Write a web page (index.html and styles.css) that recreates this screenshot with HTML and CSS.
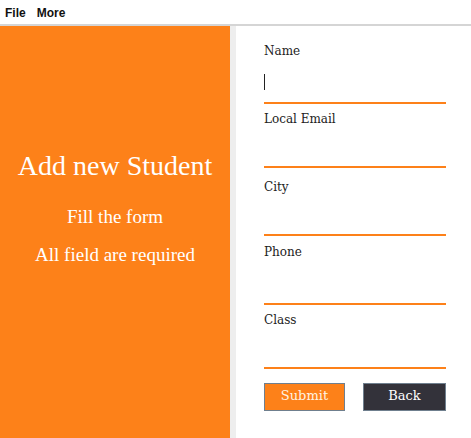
FILE: index.html
```html
<!DOCTYPE html>
<html>
<head>
<meta charset="utf-8">
<link rel="stylesheet" href="styles.css">
</head>
<body>
<div class="menubar">
  <span class="menu-item">File</span>
  <span class="menu-item">More</span>
</div>
<div class="main">
  <div class="intro">
    <h1 class="intro-title">Add new Student</h1>
    <p class="intro-text">Fill the form</p>
    <p class="intro-text">All field are required</p>
  </div>
  <div class="divider"></div>
  <form class="form">
    <div class="field">
      <label class="field-label">Name</label>
      <div class="field-input tall"><span class="caret"></span></div>
    </div>
    <div class="field">
      <label class="field-label">Local Email</label>
      <div class="field-input"></div>
    </div>
    <div class="field spaced">
      <label class="field-label">City</label>
      <div class="field-input"></div>
    </div>
    <div class="field loose">
      <label class="field-label">Phone</label>
      <div class="field-input tall"></div>
    </div>
    <div class="field">
      <label class="field-label">Class</label>
      <div class="field-input"></div>
    </div>
    <div class="actions">
      <button type="button" class="btn btn-submit">Submit</button>
      <button type="button" class="btn btn-back">Back</button>
    </div>
  </form>
</div>
</body>
</html>
```
FILE: styles.css
```css
html, body {
  margin: 0;
  padding: 0;
  background: #ffffff;
}
body {
  width: 471px;
  height: 438px;
  overflow: hidden;
}
.menubar {
  height: 21px;
  padding: 3px 0 0 5px;
  line-height: 21px;
  border-bottom: 2px solid #d5d5d5;
  font-family: "Liberation Sans", Arial, sans-serif;
  font-weight: bold;
  font-size: 12px;
  color: #111;
  display: flex;
  gap: 11px;
}
.main {
  display: flex;
  height: 412px;
}
.intro {
  width: 230px;
  background: #fd8119;
  color: #ffffff;
  text-align: center;
  padding-top: 124px;
  box-sizing: border-box;
  font-family: "Liberation Serif", "Times New Roman", serif;
}
.intro-title {
  margin: 0 0 24px;
  font-weight: normal;
  font-size: 28px;
  line-height: 32px;
}
.intro-text {
  margin: 0 0 16px;
  font-size: 19px;
  line-height: 22px;
}
.divider {
  width: 6px;
  background: #eeeeee;
}
.form {
  margin: 0;
  padding: 17px 0 0 28px;
  width: 182px;
  font-family: "DejaVu Serif", serif;
}
.field + .field {
  margin-top: 7px;
}
.field.spaced {
  margin-top: 11px;
}
.field.loose {
  margin-top: 8px;
}
.field-label {
  display: block;
  font-size: 12px;
  line-height: 16px;
  color: #222222;
}
.field-input {
  position: relative;
  height: 39px;
  border-bottom: 2px solid #fd8119;
}
.field-input.tall {
  height: 43px;
}
.caret {
  position: absolute;
  left: 0;
  top: 15px;
  width: 1px;
  height: 16px;
  background: #222;
}
.actions {
  display: flex;
  gap: 18px;
  margin-top: 14px;
}
.btn {
  height: 28px;
  margin: 0;
  border: 1px solid #6f7f8e;
  font-family: "DejaVu Serif", serif;
  font-size: 13px;
  padding: 0 0 3px;
  line-height: 24px;
  cursor: pointer;
}
.btn-submit {
  width: 81px;
  background: #fd8119;
  color: #fff3e3;
}
.btn-back {
  width: 83px;
  background: #33323a;
  color: #ffffff;
}
```
